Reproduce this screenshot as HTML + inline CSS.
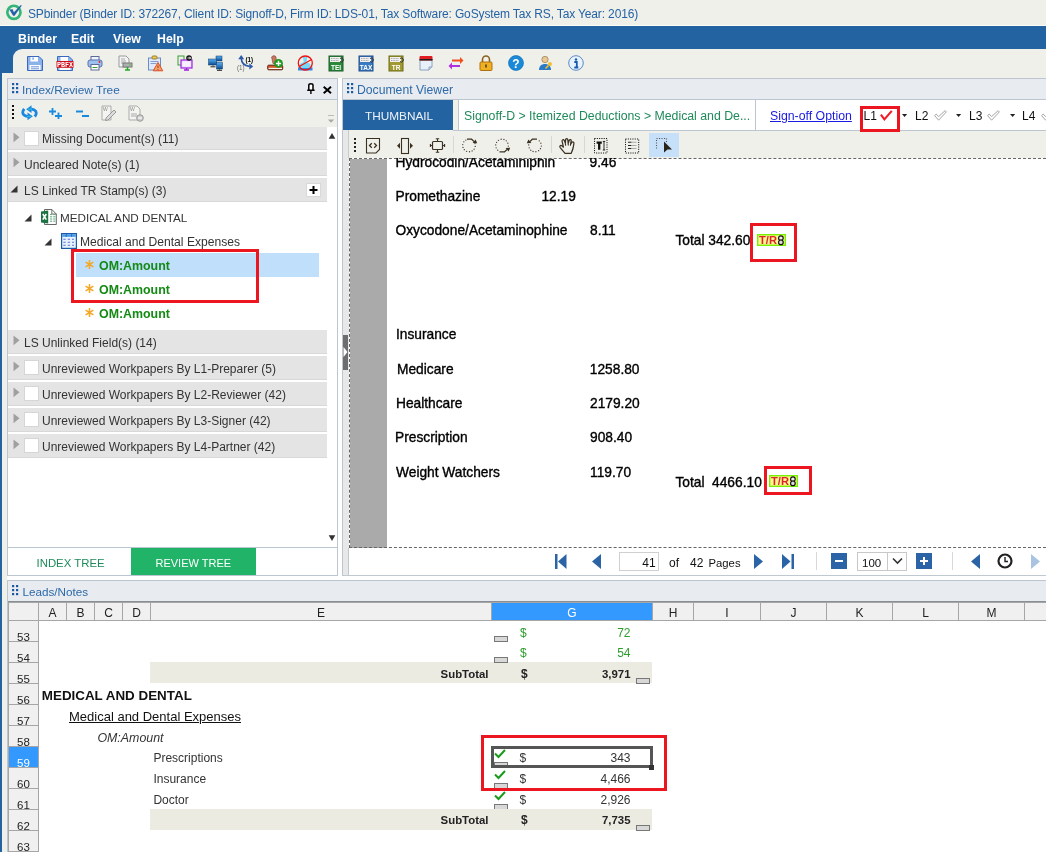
<!DOCTYPE html>
<html><head><meta charset="utf-8">
<style>
*{box-sizing:border-box}
html,body{margin:0;padding:0}
body{width:1046px;height:852px;overflow:hidden;position:relative;background:#f0f0eb;font-family:"Liberation Sans",sans-serif;font-size:12px;color:#222}
.a{position:absolute}
.t{position:absolute;white-space:nowrap;line-height:1}
svg{overflow:visible}
</style></head><body><div style="position:absolute;left:0;top:0;width:1046px;height:852px;overflow:hidden;will-change:transform">
<div class="a" style="left:0px;top:0px;width:1046px;height:25px;background:#f0f0eb"></div>
<div class="a" style="left:0px;top:25px;width:1046px;height:1px;background:#fbfbf8"></div>
<svg class="a" style="left:5px;top:3px" width="18" height="18" viewBox="0 0 18 18"><circle cx="8.9" cy="9.35" r="6.6" fill="none" stroke="#35b679" stroke-width="2.7"/><path d="M4.3 6.6L7.7 6.3L8.9 9.3L15.9 2.1L16.8 2.5L9.6 12.8L8.1 12.8Z" fill="#2562a8"/></svg>
<div class="t" style="left:28px;top:8px;font-size:12px;color:#2462a6;letter-spacing:-0.14px">SPbinder (Binder ID: 372267, Client ID: Signoff-D, Firm ID: LDS-01, Tax Software: GoSystem Tax RS, Tax Year: 2016)</div>
<div class="a" style="left:0px;top:26px;width:1046px;height:47px;background:#2463a1"></div>
<div class="t" style="left:18px;top:33px;font-size:12.3px;color:#fff;font-weight:bold">Binder</div>
<div class="t" style="left:71px;top:33px;font-size:12.3px;color:#fff;font-weight:bold">Edit</div>
<div class="t" style="left:113px;top:33px;font-size:12.3px;color:#fff;font-weight:bold">View</div>
<div class="t" style="left:157px;top:33px;font-size:12.3px;color:#fff;font-weight:bold">Help</div>
<div class="a" style="left:13px;top:49px;width:1033px;height:24px;background:#f0f0eb;border-top-left-radius:9px"></div>
<svg class="a" style="left:27px;top:55px" width="16" height="16" viewBox="0 0 16 16"><path d="M.5 1.5H12L15.5 5V15.5H.5Z" fill="#8cb2ea" stroke="#3a68c0"/><rect x="3.5" y="2" width="7.5" height="4.5" fill="#fff"/><rect x="5.2" y="2.5" width="1.8" height="2.2" fill="#8cb2ea"/><rect x="2.5" y="10" width="11" height="5" fill="#fff"/><path d="M4 11.8h8M4 13.8h8" stroke="#6a90d8"/></svg>
<svg class="a" style="left:57px;top:55px" width="16" height="16" viewBox="0 0 16 16"><path d="M.5 1.5H12L15.5 5V15.5H.5Z" fill="#8cb2ea" stroke="#3a68c0"/><rect x="3.5" y="2" width="7.5" height="4.5" fill="#fff"/><rect x="2.5" y="12" width="11" height="3" fill="#fff"/><rect x="-.5" y="6" width="17" height="6.8" fill="#d0101c"/><text x="8" y="11.8" font-size="7" font-family="Liberation Mono" font-weight="bold" fill="#fff" text-anchor="middle" textLength="16" lengthAdjust="spacingAndGlyphs">PBFX</text></svg>
<svg class="a" style="left:87px;top:55px" width="16" height="16" viewBox="0 0 16 16"><rect x="4" y="1.5" width="8" height="4" fill="#eef3fc" stroke="#606a98"/><rect x="1" y="5" width="14" height="7" rx="2" fill="#9cc0f0" stroke="#5a70a8"/><circle cx="12.5" cy="7" r=".9" fill="#e02020"/><rect x="4" y="9.5" width="8" height="5.5" fill="#fff" stroke="#606a98"/><path d="M5.5 12.5h5" stroke="#30a030"/></svg>
<svg class="a" style="left:117px;top:55px" width="16" height="16" viewBox="0 0 16 16"><path d="M2 1h7l3 3v8H2z" fill="#f4f4f4" stroke="#9a9a9a"/><path d="M4 4h4M4 6h5M4 8h5" stroke="#9a9a9a" stroke-width=".8"/><rect x="6" y="8" width="9" height="4" fill="#b0b0b0" stroke="#777"/><circle cx="13" cy="10" r=".7" fill="#3c3"/><path d="M10.5 12v2.5M8 15h5" stroke="#2a2" stroke-width="1.5"/></svg>
<svg class="a" style="left:147px;top:55px" width="16" height="16" viewBox="0 0 16 16"><rect x="1.5" y="3" width="12" height="12" fill="#dfe9fa" stroke="#6a8cc8"/><rect x="5" y="1" width="5" height="3" rx="1" fill="#e8c860" stroke="#a08020"/><path d="M3.5 6.5h8M3.5 8.5h6" stroke="#6a8cc8" stroke-width=".8"/><path d="M11 7.5l4.8 8.3H6.2z" fill="#f0a070" stroke="#e05020"/><path d="M11 10.5v2.5M11 14v.8" stroke="#c03000"/></svg>
<svg class="a" style="left:177px;top:55px" width="16" height="16" viewBox="0 0 16 16"><rect x="1" y="1" width="6" height="9" fill="#e9f5e0" stroke="#3a9a3a"/><rect x="4" y="5" width="11" height="8" fill="#e8d8ff" stroke="#a020e0" stroke-width="1.2"/><rect x="5.5" y="6.5" width="8" height="5" fill="#f8f0ff"/><path d="M7 15h5M9.5 13v2" stroke="#a020e0" stroke-width="1.3"/><circle cx="12" cy="3" r="2.8" fill="#111"/><path d="M10.5 3h3M12.5 1.8l1 1.2-1 1.2" stroke="#fff" stroke-width=".9" fill="none"/></svg>
<svg class="a" style="left:207px;top:55px" width="16" height="16" viewBox="0 0 16 16"><defs><linearGradient id="mg" x1="0" y1="0" x2="0" y2="1"><stop offset="0" stop-color="#5ab0f0"/><stop offset="1" stop-color="#0a4a90"/></linearGradient></defs><rect x="9" y="1" width="6" height="5" fill="url(#mg)" stroke="#0a3a70" stroke-width=".5"/><rect x="1.5" y="4" width="8" height="6" fill="url(#mg)" stroke="#0a3a70" stroke-width=".5"/><rect x="9.5" y="7.5" width="6" height="6.5" fill="url(#mg)" stroke="#0a3a70" stroke-width=".5"/><path d="M3.5 11.8h5M10 15.3h5" stroke="#222" stroke-width="1"/><path d="M6 10v1.5M12.5 14v1.3" stroke="#666"/></svg>
<svg class="a" style="left:237px;top:55px" width="16" height="16" viewBox="0 0 16 16"><path d="M4.3 3.5C4.5 8 7 10.8 12.5 11.3" stroke="#2a5aa8" stroke-width="1.7" fill="none"/><path d="M4.2 0L1.2 4.2H7.2Z" fill="#2a5aa8"/><path d="M16.2 11.4L12.3 8.3V14.5Z" fill="#2a5aa8"/><text x="12.3" y="6.6" font-size="6.3" font-weight="bold" font-family="Liberation Sans" text-anchor="middle" fill="#000">(1)</text><text x="3.8" y="15.3" font-size="6.3" font-family="Liberation Sans" text-anchor="middle" fill="#666">(1)</text></svg>
<svg class="a" style="left:267px;top:55px" width="16" height="16" viewBox="0 0 16 16"><path d="M4.6 2.2C5.4 .2 8.4 .3 9 2l.6 6.2-3.6.4Z" fill="#c87860" stroke="#7a4030" stroke-width=".6"/><rect x=".7" y="10.2" width="15" height="4.6" rx="1" fill="#d85a28" stroke="#5a2010" stroke-width="1"/><path d="M1.6 13.4h13.4" stroke="#fff" stroke-width="1.1"/><circle cx="11.5" cy="8.4" r="4.4" fill="#1e9a1e"/><path d="M11.5 5.8v5.2M8.9 8.4h5.2" stroke="#fff" stroke-width="1.5"/></svg>
<svg class="a" style="left:297px;top:55px" width="16" height="16" viewBox="0 0 16 16"><rect x="1" y="12.3" width="14.5" height="3.2" fill="#2a8ae8"/><path d="M5.8 1.8h4.6l-.9 5.2 4 2v4H2.7v-4l4-2z" fill="#78d8f8"/><circle cx="8.3" cy="8" r="7" fill="none" stroke="#f01010" stroke-width="1.3"/><path d="M2.2 11.6L14.6 4.4" stroke="#f01010" stroke-width="1.1"/></svg>
<svg class="a" style="left:328px;top:55px" width="16" height="16" viewBox="0 0 16 16"><rect x="1" y="1" width="14" height="15" fill="#2a8a3a" stroke="#1a5a2a"/><rect x="2" y="2" width="11" height="5" fill="#f0f0f0"/><path d="M3 3.5h8M3 5.5h8" stroke="#888" stroke-width=".7" stroke-dasharray="1 .6"/><path d="M12 3.5a2 2 0 1 1 0 3" stroke="#333" fill="none"/><text x="8" y="14.5" font-size="6.5" font-weight="bold" font-family="Liberation Sans" text-anchor="middle" fill="#fff">TEI</text></svg>
<svg class="a" style="left:358px;top:55px" width="16" height="16" viewBox="0 0 16 16"><rect x="1" y="1" width="14" height="15" fill="#3a7ac0" stroke="#1a4a8a"/><rect x="2" y="2" width="11" height="5" fill="#f0f0f0"/><path d="M3 3.5h8M3 5.5h8" stroke="#888" stroke-width=".7" stroke-dasharray="1 .6"/><path d="M12 3.5a2 2 0 1 1 0 3" stroke="#333" fill="none"/><text x="8" y="14.5" font-size="6.5" font-weight="bold" font-family="Liberation Sans" text-anchor="middle" fill="#fff">TAX</text></svg>
<svg class="a" style="left:388px;top:55px" width="16" height="16" viewBox="0 0 16 16"><rect x="1" y="1" width="14" height="15" fill="#a09a30" stroke="#6a6a10"/><rect x="2" y="2" width="11" height="5" fill="#f0f0f0"/><path d="M3 3.5h8M3 5.5h8" stroke="#888" stroke-width=".7" stroke-dasharray="1 .6"/><path d="M12 3.5a2 2 0 1 1 0 3" stroke="#333" fill="none"/><text x="8" y="14.5" font-size="6.5" font-weight="bold" font-family="Liberation Sans" text-anchor="middle" fill="#fff">TR</text></svg>
<svg class="a" style="left:418px;top:55px" width="16" height="16" viewBox="0 0 16 16"><path d="M2 4h12v8l-3 3H2z" fill="#e8f0fa" stroke="#8aa0c0"/><path d="M11 15v-3h3" fill="#d0dcea" stroke="#8aa0c0"/><rect x="1.5" y="1" width="13" height="4.5" rx="1" fill="#e01c24"/><rect x="1.5" y="4" width="13" height="1.5" fill="#202020"/></svg>
<svg class="a" style="left:448px;top:55px" width="16" height="16" viewBox="0 0 16 16"><path d="M4 5.5h9" stroke="#f05020" stroke-width="2"/><path d="M12 2l3.5 3.5L12 9z" fill="#f05020"/><path d="M3 11h9" stroke="#b030e0" stroke-width="2"/><path d="M4 7.5L.5 11 4 14.5z" fill="#b030e0"/></svg>
<svg class="a" style="left:478px;top:55px" width="16" height="16" viewBox="0 0 16 16"><path d="M4.5 7V4.5a3.5 3.5 0 0 1 7 0V7" stroke="#8a6020" stroke-width="1.6" fill="none"/><rect x="2" y="7" width="12" height="8.5" rx="1" fill="#f0b020" stroke="#b07010"/><rect x="7.3" y="9.5" width="1.4" height="3" fill="#333"/></svg>
<svg class="a" style="left:508px;top:55px" width="16" height="16" viewBox="0 0 16 16"><circle cx="8" cy="8" r="7.5" fill="#1a8ad8" stroke="#0a6ab0" stroke-width=".6"/><text x="8" y="12.5" font-size="12" font-weight="bold" font-family="Liberation Sans" text-anchor="middle" fill="#fff">?</text></svg>
<svg class="a" style="left:538px;top:55px" width="16" height="16" viewBox="0 0 16 16"><circle cx="7" cy="4.5" r="3.2" fill="#e8c890" stroke="#8a6a40" stroke-width=".6"/><path d="M1 15c0-4 2.5-6 6-6s6 2 6 6z" fill="#2a7ac8"/><circle cx="12" cy="9" r="2" fill="#f0c030"/><path d="M10.5 10.5l-3 3" stroke="#f0c030" stroke-width="1.6"/></svg>
<svg class="a" style="left:568px;top:55px" width="16" height="16" viewBox="0 0 16 16"><circle cx="8" cy="8" r="7.3" fill="#e8f2fc" stroke="#5a8ac8" stroke-width="1"/><circle cx="8" cy="4.5" r="1.2" fill="#1a5ab0"/><path d="M6.3 7h2.5v5.5M6.3 12.5h4" stroke="#1a5ab0" stroke-width="1.8" fill="none"/></svg>
<div class="a" style="left:0px;top:73px;width:2px;height:779px;background:#2463a1"></div>
<div class="a" style="left:7px;top:78px;width:331px;height:498px;border:1px solid #bcc6d0;background:#fff"></div>
<div class="a" style="left:8px;top:79px;width:329px;height:21px;background:#e8ebf0;border-bottom:1px solid #bcc6d0"></div>
<svg class="a" style="left:12px;top:83px" width="8" height="11" viewBox="0 0 8 11"><rect x="0" y="0" width="2.2" height="2.2" fill="#1a5aa0"/><rect x="4" y="0" width="2.2" height="2.2" fill="#1a5aa0"/><rect x="0" y="4" width="2.2" height="2.2" fill="#1a5aa0"/><rect x="4" y="4" width="2.2" height="2.2" fill="#1a5aa0"/><rect x="0" y="8" width="2.2" height="2.2" fill="#1a5aa0"/><rect x="4" y="8" width="2.2" height="2.2" fill="#1a5aa0"/></svg>
<div class="t" style="left:22px;top:85px;font-size:11.8px;color:#2d6aa8;">Index/Review Tree</div>
<svg class="a" style="left:307px;top:83px" width="8" height="11" viewBox="0 0 8 11"><path d="M1.8 7V2.3C1.8 1.2 2.6 .8 3.9 .8C5.2 .8 6 1.2 6 2.3V7" stroke="#000" stroke-width="1.5" fill="#fff"/><path d="M.2 7.3H7.6M3.9 7.3V11" stroke="#000" stroke-width="1.4"/></svg>
<svg class="a" style="left:323px;top:85.5px" width="9" height="8" viewBox="0 0 9 8"><path d="M.7 .7l7.3 6.6M8 .7L.7 7.3" stroke="#000" stroke-width="1.9"/></svg>
<div class="a" style="left:8px;top:100px;width:329px;height:27px;background:#f0f0eb"></div>
<svg class="a" style="left:12px;top:105px" width="3" height="17" viewBox="0 0 3 17"><rect x="0" y="0" width="2" height="2" fill="#111"/><rect x="0" y="4" width="2" height="2" fill="#111"/><rect x="0" y="8" width="2" height="2" fill="#111"/><rect x="0" y="12" width="2" height="2" fill="#111"/></svg>
<svg class="a" style="left:21px;top:105px" width="17" height="16" viewBox="0 0 17 16"><path d="M9 4.2C12 3.8 15.3 5.2 15.3 8C15.3 9.5 14.6 10.6 13.8 11.6" stroke="#1a88e0" stroke-width="2.8" fill="none"/><path d="M5.2 4.2L10.5 0.3V8.1Z" fill="#1a88e0"/><path d="M8 11.3C5 11.7 1.7 10.3 1.7 7.5C1.7 6 2.4 4.9 3.2 3.9" stroke="#1a88e0" stroke-width="2.8" fill="none"/><path d="M11.8 11.3L6.5 7.4V15.2Z" fill="#1a88e0"/><path d="M7 4.2h4M10 11.3h-4" stroke="#38c4d8" stroke-width="1"/></svg>
<svg class="a" style="left:49px;top:108px" width="14" height="11" viewBox="0 0 14 11"><path d="M0 3.5h7M3.5 0v7M6 8h7M9.5 4.5v6.5" stroke="#1a8ae0" stroke-width="1.8"/></svg>
<svg class="a" style="left:76px;top:110px" width="14" height="8" viewBox="0 0 14 8"><path d="M0 1.5h7M6 6h7" stroke="#1a8ae0" stroke-width="1.8"/></svg>
<svg class="a" style="left:101px;top:105px" width="16" height="16" viewBox="0 0 16 16"><path d="M1 1h9v14H1z" fill="#f4f4f0" stroke="#aaa"/><text x="2" y="6" font-size="5" fill="#888" font-family="Liberation Sans">W</text><path d="M5 13l8-8 2 2-8 8-2.5.5z" fill="#ddd" stroke="#999"/></svg>
<svg class="a" style="left:128px;top:105px" width="16" height="17" viewBox="0 0 16 17"><path d="M1 1h8l3 3v11H1z" fill="#f4f4f0" stroke="#aaa"/><text x="2" y="6" font-size="5" fill="#888" font-family="Liberation Sans">W</text><path d="M3 9h6M3 11h6" stroke="#aaa"/><circle cx="12" cy="13" r="3.3" fill="#ccc" stroke="#999"/><path d="M10 13h4" stroke="#fff" stroke-width="1.2"/></svg>
<svg class="a" style="left:327px;top:114px" width="8" height="10" viewBox="0 0 8 10"><path d="M1 1.5h6" stroke="#bbb"/><path d="M.8 5.6h6.4L4 8.8z" fill="#aaa"/></svg>
<div class="a" style="left:8px;top:127px;width:319px;height:23px;background:#e4e4e4;border-bottom:1px solid #d8d8d8"></div>
<div class="a" style="left:8px;top:152px;width:319px;height:23.5px;background:#e4e4e4;border-bottom:1px solid #d8d8d8"></div>
<div class="a" style="left:8px;top:178px;width:319px;height:23.5px;background:#e4e4e4;border-bottom:1px solid #d8d8d8"></div>
<div class="a" style="left:8px;top:330px;width:319px;height:23.5px;background:#e4e4e4;border-bottom:1px solid #d8d8d8"></div>
<div class="a" style="left:8px;top:356px;width:319px;height:23.5px;background:#e4e4e4;border-bottom:1px solid #d8d8d8"></div>
<div class="a" style="left:8px;top:382px;width:319px;height:23.5px;background:#e4e4e4;border-bottom:1px solid #d8d8d8"></div>
<div class="a" style="left:8px;top:408px;width:319px;height:23.5px;background:#e4e4e4;border-bottom:1px solid #d8d8d8"></div>
<div class="a" style="left:8px;top:434px;width:319px;height:23.5px;background:#e4e4e4;border-bottom:1px solid #d8d8d8"></div>
<svg class="a" style="left:13px;top:131.5px" width="7" height="11" viewBox="0 0 7 11"><path d="M0.5 0.5L6.5 5.3L0.5 10.2z" fill="#a0a0a0"/></svg>
<div class="a" style="left:24px;top:130.5px;width:15px;height:15px;background:#fff;border:1px solid #d6d6d6"></div>
<div class="t" style="left:42px;top:133px;font-size:12px;color:#333;">Missing Document(s) (11)</div>
<svg class="a" style="left:13px;top:156.5px" width="7" height="11" viewBox="0 0 7 11"><path d="M0.5 0.5L6.5 5.3L0.5 10.2z" fill="#a0a0a0"/></svg>
<div class="t" style="left:24px;top:159px;font-size:12px;color:#333;">Uncleared Note(s) (1)</div>
<svg class="a" style="left:13px;top:334.5px" width="7" height="11" viewBox="0 0 7 11"><path d="M0.5 0.5L6.5 5.3L0.5 10.2z" fill="#a0a0a0"/></svg>
<div class="t" style="left:24px;top:337px;font-size:12px;color:#333;">LS Unlinked Field(s) (14)</div>
<svg class="a" style="left:13px;top:360.5px" width="7" height="11" viewBox="0 0 7 11"><path d="M0.5 0.5L6.5 5.3L0.5 10.2z" fill="#a0a0a0"/></svg>
<div class="a" style="left:24px;top:359.5px;width:15px;height:15px;background:#fff;border:1px solid #d6d6d6"></div>
<div class="t" style="left:42px;top:363px;font-size:12px;color:#333;">Unreviewed Workpapers By L1-Preparer (5)</div>
<svg class="a" style="left:13px;top:386.5px" width="7" height="11" viewBox="0 0 7 11"><path d="M0.5 0.5L6.5 5.3L0.5 10.2z" fill="#a0a0a0"/></svg>
<div class="a" style="left:24px;top:385.5px;width:15px;height:15px;background:#fff;border:1px solid #d6d6d6"></div>
<div class="t" style="left:42px;top:389px;font-size:12px;color:#333;">Unreviewed Workpapers By L2-Reviewer (42)</div>
<svg class="a" style="left:13px;top:412.5px" width="7" height="11" viewBox="0 0 7 11"><path d="M0.5 0.5L6.5 5.3L0.5 10.2z" fill="#a0a0a0"/></svg>
<div class="a" style="left:24px;top:411.5px;width:15px;height:15px;background:#fff;border:1px solid #d6d6d6"></div>
<div class="t" style="left:42px;top:415px;font-size:12px;color:#333;">Unreviewed Workpapers By L3-Signer (42)</div>
<svg class="a" style="left:13px;top:438.5px" width="7" height="11" viewBox="0 0 7 11"><path d="M0.5 0.5L6.5 5.3L0.5 10.2z" fill="#a0a0a0"/></svg>
<div class="a" style="left:24px;top:437.5px;width:15px;height:15px;background:#fff;border:1px solid #d6d6d6"></div>
<div class="t" style="left:42px;top:441px;font-size:12px;color:#333;">Unreviewed Workpapers By L4-Partner (42)</div>
<svg class="a" style="left:9.5px;top:185px" width="8" height="8" viewBox="0 0 8 8"><path d="M7.5 0.5V7.5H0.5z" fill="#333"/></svg>
<div class="t" style="left:24px;top:185px;font-size:12px;color:#333;">LS Linked TR Stamp(s) (3)</div>
<div class="a" style="left:306px;top:183px;width:15px;height:14px;background:#fff;border:1px solid #d8d8d8"></div>
<svg class="a" style="left:308px;top:185px" width="11" height="10" viewBox="0 0 11 10"><path d="M5.5 1v8M1.5 5h8" stroke="#000" stroke-width="2"/></svg>
<svg class="a" style="left:328px;top:133px" width="8" height="6" viewBox="0 0 8 6"><path d="M4 0L7.3 5.8H.7z" fill="#333"/></svg>
<svg class="a" style="left:328px;top:535px" width="8" height="6" viewBox="0 0 8 6"><path d="M.7 .2h6.6L4 6z" fill="#333"/></svg>
<svg class="a" style="left:23.5px;top:213.5px" width="8" height="8" viewBox="0 0 8 8"><path d="M7.5 0.5V7.5H0.5z" fill="#333"/></svg>
<svg class="a" style="left:41px;top:209px" width="16" height="16" viewBox="0 0 16 16"><path d="M3.5 .5H10.8L15.3 5V15.5H3.5Z" fill="#fff" stroke="#555" stroke-width=".9"/><path d="M10.8 .5V5H15.3" fill="none" stroke="#555" stroke-width=".8"/><path d="M9 5.6h2.2M12.2 5.6h2.2M9 7.8h2.2M12.2 7.8h2.2M9 10h2.2M12.2 10h2.2M9 12.2h2.2M12.2 12.2h2.2" stroke="#5aa878" stroke-width="1"/><path d="M0 2.6L7.2 1.6V14.5L0 13.5Z" fill="#1d7344"/><path d="M1.8 5L5.3 10.6M5.3 5L1.8 10.6" stroke="#fff" stroke-width="1.6"/></svg>
<div class="t" style="left:60px;top:212px;font-size:11.7px;color:#333;">MEDICAL AND DENTAL</div>
<svg class="a" style="left:43.5px;top:237.5px" width="8" height="8" viewBox="0 0 8 8"><path d="M7.5 0.5V7.5H0.5z" fill="#333"/></svg>
<svg class="a" style="left:61px;top:233px" width="16" height="16" viewBox="0 0 16 16"><rect x=".6" y=".6" width="14.8" height="14.8" fill="#e4f6fc" stroke="#1a5aa8" stroke-width="1.2"/><rect x="1.2" y="1.2" width="13.6" height="2.6" fill="#4a9ae8"/><path d="M5.3 1v3M10.6 1v3" stroke="#1a5aa8" stroke-width=".7"/><path d="M2.3 6.3h2.4M6.7 6.3h2.4M11 6.3h2M2.3 9.3h2.4M6.7 9.3h2.4M11 9.3h2M2.3 12.3h2.4M6.7 12.3h2.4M11 12.3h2" stroke="#6a6ad8" stroke-width="1.1"/></svg>
<div class="t" style="left:80px;top:236px;font-size:12.1px;color:#333;">Medical and Dental Expenses</div>
<div class="a" style="left:76px;top:253px;width:243px;height:24px;background:#bfdffb"></div>
<svg class="a" style="left:85px;top:260px" width="9" height="9" viewBox="0 0 9 9"><path d="M4.5 0v9M.6 2.2l7.8 4.6M.6 6.8l7.8-4.6" stroke="#f5a623" stroke-width="1.5"/></svg>
<div class="t" style="left:99px;top:260px;font-size:12.4px;color:#138a13;font-weight:bold">OM:Amount</div>
<svg class="a" style="left:85px;top:284px" width="9" height="9" viewBox="0 0 9 9"><path d="M4.5 0v9M.6 2.2l7.8 4.6M.6 6.8l7.8-4.6" stroke="#f5a623" stroke-width="1.5"/></svg>
<div class="t" style="left:99px;top:284px;font-size:12.4px;color:#138a13;font-weight:bold">OM:Amount</div>
<svg class="a" style="left:85px;top:308px" width="9" height="9" viewBox="0 0 9 9"><path d="M4.5 0v9M.6 2.2l7.8 4.6M.6 6.8l7.8-4.6" stroke="#f5a623" stroke-width="1.5"/></svg>
<div class="t" style="left:99px;top:308px;font-size:12.4px;color:#138a13;font-weight:bold">OM:Amount</div>
<div class="a" style="left:71px;top:249px;width:188px;height:54px;border:3px solid #ec1620"></div>
<div class="a" style="left:8px;top:547px;width:329px;height:1px;background:#bcc6d0"></div>
<div class="a" style="left:131px;top:548px;width:125px;height:27px;background:#21b468"></div>
<div class="t" style="left:36.5px;top:558px;font-size:11.4px;color:#1f8a5a;">INDEX TREE</div>
<div class="t" style="left:155.5px;top:558px;font-size:11.0px;color:#fff;">REVIEW TREE</div>
<div class="a" style="left:338px;top:78px;width:4px;height:498px;background:#fff"></div>
<div class="a" style="left:342px;top:78px;width:704px;height:498px;border:1px solid #bcc6d0;border-right:none;background:#fff"></div>
<div class="a" style="left:343px;top:79px;width:703px;height:21px;background:#e8ebf0;border-bottom:1px solid #bcc6d0"></div>
<svg class="a" style="left:347px;top:83px" width="8" height="11" viewBox="0 0 8 11"><rect x="0" y="0" width="2.2" height="2.2" fill="#1a5aa0"/><rect x="4" y="0" width="2.2" height="2.2" fill="#1a5aa0"/><rect x="0" y="4" width="2.2" height="2.2" fill="#1a5aa0"/><rect x="4" y="4" width="2.2" height="2.2" fill="#1a5aa0"/><rect x="0" y="8" width="2.2" height="2.2" fill="#1a5aa0"/><rect x="4" y="8" width="2.2" height="2.2" fill="#1a5aa0"/></svg>
<div class="t" style="left:357px;top:84px;font-size:12.2px;color:#2d6aa8;">Document Viewer</div>
<div class="a" style="left:343px;top:100px;width:110px;height:30px;background:#2463a1"></div>
<div class="t" style="left:365px;top:111px;font-size:11.8px;color:#eef2f7;">THUMBNAIL</div>
<div class="a" style="left:453px;top:100px;width:5px;height:30px;background:#f0f0eb"></div>
<div class="a" style="left:458px;top:100px;width:588px;height:30px;background:#fff;border-left:1px solid #bcc6d0"></div>
<div class="t" style="left:464px;top:110px;font-size:12.3px;color:#1f8a5a;">Signoff-D &gt; Itemized Deductions &gt; Medical and De...</div>
<div class="a" style="left:755px;top:100px;width:1px;height:30px;background:#bcc6d0"></div>
<div class="t" style="left:770px;top:110px;font-size:12.3px;color:#1a1ae0;text-decoration:underline">Sign-off Option</div>
<div class="t" style="left:863.5px;top:110px;font-size:12px;color:#111;">L1</div>
<svg class="a" style="left:880px;top:110px" width="13" height="11" viewBox="0 0 13 11"><path d="M.9 4.6L4.4 9.4L11.8 .9" stroke="#ee1c25" stroke-width="2.1" fill="none"/></svg>
<svg class="a" style="left:902px;top:113.5px" width="6" height="4" viewBox="0 0 6 4"><path d="M0 0h5.2L2.6 3z" fill="#222"/></svg>
<div class="t" style="left:915px;top:110px;font-size:12px;color:#111;">L2</div>
<svg class="a" style="left:934px;top:110px" width="13" height="11" viewBox="0 0 13 11"><path d="M.6 5.6L2.2 4.1L4.6 6.6L11.2 .6L12.4 1.9L4.6 10.2Z" fill="#fff" stroke="#9a9a9a" stroke-width=".9"/></svg>
<svg class="a" style="left:956px;top:113.5px" width="6" height="4" viewBox="0 0 6 4"><path d="M0 0h5.2L2.6 3z" fill="#222"/></svg>
<div class="t" style="left:969px;top:110px;font-size:12px;color:#111;">L3</div>
<svg class="a" style="left:987px;top:110px" width="13" height="11" viewBox="0 0 13 11"><path d="M.6 5.6L2.2 4.1L4.6 6.6L11.2 .6L12.4 1.9L4.6 10.2Z" fill="#fff" stroke="#9a9a9a" stroke-width=".9"/></svg>
<svg class="a" style="left:1010px;top:113.5px" width="6" height="4" viewBox="0 0 6 4"><path d="M0 0h5.2L2.6 3z" fill="#222"/></svg>
<div class="t" style="left:1022px;top:110px;font-size:12px;color:#111;">L4</div>
<svg class="a" style="left:1041px;top:110px" width="13" height="11" viewBox="0 0 13 11"><path d="M.6 5.6L2.2 4.1L4.6 6.6L11.2 .6L12.4 1.9L4.6 10.2Z" fill="#fff" stroke="#9a9a9a" stroke-width=".9"/></svg>
<div class="a" style="left:343px;top:130px;width:6px;height:418px;background:#e8e8e8"></div>
<div class="a" style="left:349px;top:158px;width:38px;height:390px;background:#aaa"></div>
<div class="a" style="left:343px;top:335px;width:5px;height:35px;background:#6e6e6e"></div>
<svg class="a" style="left:343px;top:345px" width="5" height="14" viewBox="0 0 5 14"><path d="M0.5 2L4.5 7L0.5 12z" fill="#fff"/></svg>
<div class="a" style="left:349px;top:130px;width:697px;height:28px;background:#f0f0eb"></div>
<div class="a" style="left:348px;top:130px;width:1px;height:28px;background:#c4ccd4"></div>
<div class="a" style="left:453px;top:130px;width:593px;height:1px;background:#bcc6d0"></div>
<div class="a" style="left:860px;top:106px;width:40px;height:26px;border:3px solid #ec1620"></div>
<svg class="a" style="left:354px;top:138px" width="3" height="15" viewBox="0 0 3 15"><rect x="0" y="0" width="2" height="2" fill="#222"/><rect x="0" y="4" width="2" height="2" fill="#222"/><rect x="0" y="8" width="2" height="2" fill="#222"/><rect x="0" y="12" width="2" height="2" fill="#222"/></svg>
<svg class="a" style="left:365px;top:137px" width="16" height="18" viewBox="0 0 16 18"><path d="M1.5 1.5h13v11l-3.5 3.5H1.5z" fill="none" stroke="#3a3020" stroke-width="1.1"/><path d="M6.8 6.3l-2.3 2.2 2.3 2.2M9.2 6.3l2.3 2.2-2.3 2.2" stroke="#3a3020" stroke-width="1.3" fill="none"/></svg>
<svg class="a" style="left:396px;top:137px" width="18" height="18" viewBox="0 0 18 18"><rect x="5.5" y="1.5" width="7" height="15" fill="none" stroke="#3a3020" stroke-width="1.1"/><path d="M1 8.8l3-3v6zM17 8.8l-3-3v6z" fill="#3a3020"/></svg>
<svg class="a" style="left:429px;top:137px" width="17" height="17" viewBox="0 0 17 17"><rect x="3.5" y="4.5" width="10" height="8" rx="1" fill="none" stroke="#3a3020" stroke-width="1.2"/><path d="M8.5 4.2V2.3M6.8 1.8h3.4M8.5 12.8v1.9M6.8 15.2h3.4M3.2 8.5H1.6M1.4 6.9v3.2M13.8 8.5h1.6M15.6 6.9v3.2" stroke="#3a3020" stroke-width="1.1"/></svg>
<div class="a" style="left:453px;top:136px;width:1px;height:17px;background:#d8d8d2"></div>
<svg class="a" style="left:462px;top:138px" width="16" height="16" viewBox="0 0 16 16"><path d="M3.85 2.04A6.3 6.3 0 1 0 12.46 4.35" stroke="#3a3020" stroke-width="1.3" stroke-linecap="round" stroke-dasharray="0 2.75" fill="none"/><path d="M5 1.2H9.6L12.2 3.6" stroke="#3a3020" stroke-width="1.2" fill="none"/><path d="M15.2 5.2L10.6 5.1L13.6 1.6Z" fill="#3a3020"/></svg>
<svg class="a" style="left:495px;top:138px" width="16" height="16" viewBox="0 0 16 16"><path d="M12.46 10.65A6.3 6.3 0 1 0 3.85 12.96" stroke="#3a3020" stroke-width="1.3" stroke-linecap="round" stroke-dasharray="0 2.75" fill="none"/><path d="M4.5 13.8H9.6L12.2 11.4" stroke="#3a3020" stroke-width="1.2" fill="none"/><path d="M15.2 9.8L10.6 9.9L13.6 13.4Z" fill="#3a3020"/></svg>
<svg class="a" style="left:528px;top:138px" width="16" height="16" viewBox="0 0 16 16"><path d="M1.54 4.35A6.3 6.3 0 1 0 10.15 2.04" stroke="#3a3020" stroke-width="1.3" stroke-linecap="round" stroke-dasharray="0 2.75" fill="none"/><path d="M9 1.2H4.4L1.8 3.6" stroke="#3a3020" stroke-width="1.2" fill="none"/><path d="M-1.2 5.2L3.4 5.1L.4 1.6Z" fill="#3a3020"/></svg>
<div class="a" style="left:551px;top:136px;width:1px;height:17px;background:#d8d8d2"></div>
<svg class="a" style="left:559px;top:138px" width="16" height="16" viewBox="0 0 16 16"><path d="M6 15.3L1.2 9.6C.2 8.2 1.6 6.6 3 7.9L4.4 9.2L3.1 3.2C2.8 1.6 4.6 1.1 5.3 2.6L6.4 5.2L6.6 1.6C6.7 .3 8.7 .3 8.8 1.6L9.2 5.2L10.3 2.3C10.8 1 12.5 1.5 12.2 2.9L11.6 6L12.9 4.3C13.7 3.5 15.2 4 14.9 5.6L14.1 10C13.6 12.1 12.7 14 12.2 15.3Z" fill="#f0f0eb" stroke="#3a3020" stroke-width="1.25" stroke-linejoin="round"/><path d="M6.4 5.2L6.6 7.6M9.2 5.2L9.3 7.4M11.6 6L11.4 7.8" stroke="#3a3020" stroke-width="1.1"/></svg>
<div class="a" style="left:584px;top:136px;width:1px;height:17px;background:#d8d8d2"></div>
<svg class="a" style="left:594px;top:138px" width="14" height="16" viewBox="0 0 14 16"><rect x=".5" y=".5" width="12.5" height="14.5" fill="none" stroke="#111" stroke-dasharray="1.1 1.2"/><path d="M2.6 4.6h5.2M5.2 4.6v7.2" stroke="#111" stroke-width="2.3"/><path d="M8.8 3.4h2.4M10 3.4v8.6M8.8 12h2.4" stroke="#111" stroke-width=".9"/></svg>
<svg class="a" style="left:625px;top:138px" width="15" height="16" viewBox="0 0 15 16"><rect x=".5" y="1" width="13.2" height="14" fill="none" stroke="#111" stroke-dasharray="1.1 1.2"/><path d="M3 4.2h3.5M3 7.5h3.5M3 10.5h3.5" stroke="#222" stroke-width="1.1"/><path d="M6.5 4.2h5M6.5 7.5h5M6.5 10.5h5" stroke="#aaa" stroke-width="1.1"/></svg>
<div class="a" style="left:649px;top:133px;width:30px;height:24px;background:#c5e0f8"></div>
<svg class="a" style="left:655px;top:137px" width="18" height="17" viewBox="0 0 18 17"><path d="M1.5 11.5V1.5H11.5V5" fill="none" stroke="#555" stroke-width="1.1" stroke-dasharray="1.1 1.4"/><path d="M9 4.5L17 12.5H12.5L9 15.5Z" fill="#2a2418"/></svg>
<div class="a" style="left:349px;top:158px;width:697px;height:390px;background:#fff;overflow:hidden">
<div class="a" style="left:0px;top:0px;width:697px;height:1px;border-top:1px dashed #666"></div>
<div class="a" style="left:0px;top:0px;width:1px;height:390px;border-left:1px dashed #666"></div>
<div class="a" style="left:1px;top:1px;width:37px;height:389px;background:#aaaaaa"></div>
<div class="t" style="left:46.5px;top:-2.00px;font-size:13.75px;color:#000;-webkit-text-stroke:0.35px #000">Hydrocodin/Acetaminiphin</div>
<div class="t" style="left:240.60000000000002px;top:-2.00px;font-size:13.75px;color:#000;-webkit-text-stroke:0.35px #000">9.46</div>
<div class="t" style="left:46.5px;top:32.00px;font-size:13.75px;color:#000;-webkit-text-stroke:0.35px #000">Promethazine</div>
<div class="t" style="left:192.39999999999998px;top:32.00px;font-size:13.75px;color:#000;-webkit-text-stroke:0.35px #000">12.19</div>
<div class="t" style="left:46.5px;top:66.00px;font-size:13.75px;color:#000;-webkit-text-stroke:0.35px #000">Oxycodone/Acetaminophine</div>
<div class="t" style="left:241px;top:66.00px;font-size:13.75px;color:#000;-webkit-text-stroke:0.35px #000">8.11</div>
<div class="t" style="left:326.4px;top:76.00px;font-size:13.75px;color:#000;-webkit-text-stroke:0.35px #000">Total 342.60</div>
<div class="t" style="left:47px;top:170.00px;font-size:13.75px;color:#000;-webkit-text-stroke:0.35px #000">Insurance</div>
<div class="t" style="left:48px;top:205.00px;font-size:13.75px;color:#000;-webkit-text-stroke:0.35px #000">Medicare</div>
<div class="t" style="left:240.79999999999995px;top:205.00px;font-size:13.75px;color:#000;-webkit-text-stroke:0.35px #000">1258.80</div>
<div class="t" style="left:47px;top:239.00px;font-size:13.75px;color:#000;-webkit-text-stroke:0.35px #000">Healthcare</div>
<div class="t" style="left:241px;top:239.00px;font-size:13.75px;color:#000;-webkit-text-stroke:0.35px #000">2179.20</div>
<div class="t" style="left:46px;top:273.00px;font-size:13.75px;color:#000;-webkit-text-stroke:0.35px #000">Prescription</div>
<div class="t" style="left:241px;top:273.00px;font-size:13.75px;color:#000;-webkit-text-stroke:0.35px #000">908.40</div>
<div class="t" style="left:47px;top:308.00px;font-size:13.75px;color:#000;-webkit-text-stroke:0.35px #000">Weight Watchers</div>
<div class="t" style="left:241px;top:308.00px;font-size:13.75px;color:#000;-webkit-text-stroke:0.35px #000">119.70</div>
<div class="t" style="left:326.4px;top:318.00px;font-size:13.75px;color:#000;-webkit-text-stroke:0.35px #000">Total&nbsp; 4466.10</div>
</div>
<div class="a" style="left:349px;top:547px;width:697px;height:1px;border-top:1px dashed #666"></div>
<svg class="a" style="left:757px;top:234px" width="29" height="12" viewBox="0 0 29 12"><rect x=".7" y=".7" width="27.6" height="10.6" fill="#fff98c" stroke="#78f000" stroke-width="1.4"/><text x="2" y="10" font-size="10.5" font-weight="bold" fill="#dc2430" font-family="Liberation Sans" textLength="18" lengthAdjust="spacingAndGlyphs">T/R</text><rect x="21.6" y="1.8" width="4.6" height="4.6" rx="2.2" fill="#eee" stroke="#111" stroke-width="1.2"/><rect x="21.6" y="6" width="4.6" height="4.6" rx="2.2" fill="#ddd" stroke="#111" stroke-width="1.2"/></svg>
<div class="a" style="left:750px;top:223px;width:47px;height:39px;border:3px solid #ec1620"></div>
<svg class="a" style="left:769px;top:475px" width="29" height="12" viewBox="0 0 29 12"><rect x=".7" y=".7" width="27.6" height="10.6" fill="#fff98c" stroke="#78f000" stroke-width="1.4"/><text x="2" y="10" font-size="10.5" font-weight="bold" fill="#dc2430" font-family="Liberation Sans" textLength="18" lengthAdjust="spacingAndGlyphs">T/R</text><rect x="21.6" y="1.8" width="4.6" height="4.6" rx="2.2" fill="#eee" stroke="#111" stroke-width="1.2"/><rect x="21.6" y="6" width="4.6" height="4.6" rx="2.2" fill="#ddd" stroke="#111" stroke-width="1.2"/></svg>
<div class="a" style="left:764px;top:466px;width:48px;height:29px;border:3px solid #ec1620"></div>
<div class="a" style="left:343px;top:548px;width:5px;height:28px;background:#e8e8e8;border-bottom:1px solid #c0c8d0"></div>
<div class="a" style="left:348px;top:548px;width:698px;height:28px;background:#fff;border-bottom:1px solid #c0c8d0;border-left:1px solid #c0c8d0"></div>
<svg class="a" style="left:555px;top:554px" width="12" height="15" viewBox="0 0 12 15"><rect x="0" y="0" width="2.5" height="15" fill="#2a64a6"/><path d="M11.5 0v15L3 7.5z" fill="#2a64a6"/></svg>
<svg class="a" style="left:592px;top:554px" width="9" height="15" viewBox="0 0 9 15"><path d="M9 0v15L0 7.5z" fill="#2a64a6"/></svg>
<div class="a" style="left:619px;top:552px;width:40px;height:19px;background:#fff;border:1px solid #d0d0d0"></div>
<div class="t" style="right:390.4px;top:557px;font-size:12px;color:#111;">41</div>
<div class="t" style="left:669px;top:557px;font-size:12px;color:#111;">of</div>
<div class="t" style="left:690px;top:557px;font-size:12px;color:#111;">42</div>
<div class="t" style="left:708.5px;top:558px;font-size:11.3px;color:#111;">Pages</div>
<svg class="a" style="left:754px;top:554px" width="9" height="15" viewBox="0 0 9 15"><path d="M0 0v15L9 7.5z" fill="#2a64a6"/></svg>
<svg class="a" style="left:782px;top:554px" width="12" height="15" viewBox="0 0 12 15"><path d="M0 0v15L8.5 7.5z" fill="#2a64a6"/><rect x="9.5" y="0" width="2.5" height="15" fill="#2a64a6"/></svg>
<div class="a" style="left:816px;top:552px;width:1px;height:18px;background:#d8d8d8"></div>
<div class="a" style="left:831px;top:553px;width:16px;height:16px;background:#2a64a6"></div>
<div class="a" style="left:835px;top:560px;width:8px;height:2px;background:#fff"></div>
<div class="a" style="left:857px;top:552px;width:50px;height:19px;background:#fff;border:1px solid #c8c8c8"></div>
<div class="a" style="left:887px;top:552px;width:1px;height:19px;background:#c8c8c8"></div>
<div class="t" style="left:862px;top:558px;font-size:11.5px;color:#111;">100</div>
<svg class="a" style="left:892px;top:557px" width="11" height="8" viewBox="0 0 11 8"><path d="M1 1.5l4.5 4.5 4.5-4.5" stroke="#333" stroke-width="1.6" fill="none"/></svg>
<div class="a" style="left:916px;top:553px;width:16px;height:16px;background:#2a64a6"></div>
<div class="a" style="left:920px;top:560px;width:8px;height:2px;background:#fff"></div>
<div class="a" style="left:923px;top:557px;width:2px;height:8px;background:#fff"></div>
<div class="a" style="left:952px;top:552px;width:1px;height:18px;background:#d8d8d8"></div>
<svg class="a" style="left:971px;top:554px" width="9" height="15" viewBox="0 0 9 15"><path d="M9 0v15L0 7.5z" fill="#2a64a6"/></svg>
<svg class="a" style="left:997px;top:553px" width="16" height="16" viewBox="0 0 16 16"><circle cx="8" cy="8" r="6.5" fill="#fff" stroke="#222" stroke-width="2.2"/><path d="M8 4v4.5h3" stroke="#222" stroke-width="1.4" fill="none"/></svg>
<svg class="a" style="left:1031px;top:554px" width="9" height="15" viewBox="0 0 9 15"><path d="M0 0v15L9 7.5z" fill="#a8c4e0"/></svg>
<div class="a" style="left:7px;top:576px;width:1039px;height:4px;background:#fff"></div>
<div class="a" style="left:7px;top:580px;width:1039px;height:273px;border:1px solid #bcc6d0;border-right:none;border-bottom:none;background:#fff"></div>
<div class="a" style="left:8px;top:581px;width:1038px;height:21px;background:#e8ebf0;border-bottom:1px solid #8a8f96"></div>
<svg class="a" style="left:12px;top:585px" width="8" height="11" viewBox="0 0 8 11"><rect x="0" y="0" width="2.2" height="2.2" fill="#1a5aa0"/><rect x="4" y="0" width="2.2" height="2.2" fill="#1a5aa0"/><rect x="0" y="4" width="2.2" height="2.2" fill="#1a5aa0"/><rect x="4" y="4" width="2.2" height="2.2" fill="#1a5aa0"/><rect x="0" y="8" width="2.2" height="2.2" fill="#1a5aa0"/><rect x="4" y="8" width="2.2" height="2.2" fill="#1a5aa0"/></svg>
<div class="t" style="left:22.5px;top:586px;font-size:11.7px;color:#2d6aa8;">Leads/Notes</div>
<div class="a" style="left:8px;top:602px;width:1038px;height:19px;background:#f0f0f0;border-top:1px solid #a6a6a6;border-bottom:1px solid #a6a6a6"></div>
<div class="a" style="left:38px;top:602px;width:1px;height:19px;background:#a6a6a6"></div>
<div class="a" style="left:66px;top:602px;width:1px;height:19px;background:#a6a6a6"></div>
<div class="t" style="left:-147.5px;width:400px;text-align:center;top:607px;font-size:12px;color:#222;">A</div>
<div class="a" style="left:94px;top:602px;width:1px;height:19px;background:#a6a6a6"></div>
<div class="t" style="left:-119.5px;width:400px;text-align:center;top:607px;font-size:12px;color:#222;">B</div>
<div class="a" style="left:122px;top:602px;width:1px;height:19px;background:#a6a6a6"></div>
<div class="t" style="left:-91.5px;width:400px;text-align:center;top:607px;font-size:12px;color:#222;">C</div>
<div class="a" style="left:150px;top:602px;width:1px;height:19px;background:#a6a6a6"></div>
<div class="t" style="left:-63.5px;width:400px;text-align:center;top:607px;font-size:12px;color:#222;">D</div>
<div class="a" style="left:491px;top:602px;width:1px;height:19px;background:#a6a6a6"></div>
<div class="t" style="left:121.0px;width:400px;text-align:center;top:607px;font-size:12px;color:#222;">E</div>
<div class="a" style="left:492px;top:603px;width:160px;height:17px;background:#3399ff"></div>
<div class="a" style="left:652px;top:602px;width:1px;height:19px;background:#a6a6a6"></div>
<div class="t" style="left:372.0px;width:400px;text-align:center;top:607px;font-size:12px;color:#fff;">G</div>
<div class="a" style="left:693px;top:602px;width:1px;height:19px;background:#a6a6a6"></div>
<div class="t" style="left:473.0px;width:400px;text-align:center;top:607px;font-size:12px;color:#222;">H</div>
<div class="a" style="left:760px;top:602px;width:1px;height:19px;background:#a6a6a6"></div>
<div class="t" style="left:527.0px;width:400px;text-align:center;top:607px;font-size:12px;color:#222;">I</div>
<div class="a" style="left:826px;top:602px;width:1px;height:19px;background:#a6a6a6"></div>
<div class="t" style="left:593.5px;width:400px;text-align:center;top:607px;font-size:12px;color:#222;">J</div>
<div class="a" style="left:892px;top:602px;width:1px;height:19px;background:#a6a6a6"></div>
<div class="t" style="left:659.5px;width:400px;text-align:center;top:607px;font-size:12px;color:#222;">K</div>
<div class="a" style="left:958px;top:602px;width:1px;height:19px;background:#a6a6a6"></div>
<div class="t" style="left:725.5px;width:400px;text-align:center;top:607px;font-size:12px;color:#222;">L</div>
<div class="a" style="left:1024px;top:602px;width:1px;height:19px;background:#a6a6a6"></div>
<div class="t" style="left:791.5px;width:400px;text-align:center;top:607px;font-size:12px;color:#222;">M</div>
<div class="a" style="left:1090px;top:602px;width:1px;height:19px;background:#a6a6a6"></div>
<div class="a" style="left:8px;top:602px;width:1px;height:250px;background:#a6a6a6"></div>
<div class="a" style="left:9px;top:621px;width:29px;height:20px;background:#f0f0f0;overflow:hidden"><div class="t" style="left:0;width:29px;text-align:center;top:11px;font-size:11.5px;color:#222">53</div></div>
<div class="a" style="left:9px;top:641px;width:29px;height:1px;background:#a6a6a6"></div>
<div class="a" style="left:9px;top:642px;width:29px;height:20px;background:#f0f0f0;overflow:hidden"><div class="t" style="left:0;width:29px;text-align:center;top:11px;font-size:11.5px;color:#222">54</div></div>
<div class="a" style="left:9px;top:662px;width:29px;height:1px;background:#a6a6a6"></div>
<div class="a" style="left:9px;top:663px;width:29px;height:20px;background:#f0f0f0;overflow:hidden"><div class="t" style="left:0;width:29px;text-align:center;top:11px;font-size:11.5px;color:#222">55</div></div>
<div class="a" style="left:9px;top:683px;width:29px;height:1px;background:#a6a6a6"></div>
<div class="a" style="left:9px;top:684px;width:29px;height:20px;background:#f0f0f0;overflow:hidden"><div class="t" style="left:0;width:29px;text-align:center;top:11px;font-size:11.5px;color:#222">56</div></div>
<div class="a" style="left:9px;top:704px;width:29px;height:1px;background:#a6a6a6"></div>
<div class="a" style="left:9px;top:705px;width:29px;height:20px;background:#f0f0f0;overflow:hidden"><div class="t" style="left:0;width:29px;text-align:center;top:11px;font-size:11.5px;color:#222">57</div></div>
<div class="a" style="left:9px;top:725px;width:29px;height:1px;background:#a6a6a6"></div>
<div class="a" style="left:9px;top:726px;width:29px;height:20px;background:#f0f0f0;overflow:hidden"><div class="t" style="left:0;width:29px;text-align:center;top:11px;font-size:11.5px;color:#222">58</div></div>
<div class="a" style="left:9px;top:746px;width:29px;height:1px;background:#a6a6a6"></div>
<div class="a" style="left:9px;top:747px;width:29px;height:20px;background:#3399ff;overflow:hidden"><div class="t" style="left:0;width:29px;text-align:center;top:11px;font-size:11.5px;color:#fff">59</div></div>
<div class="a" style="left:9px;top:767px;width:29px;height:1px;background:#a6a6a6"></div>
<div class="a" style="left:9px;top:768px;width:29px;height:20px;background:#f0f0f0;overflow:hidden"><div class="t" style="left:0;width:29px;text-align:center;top:11px;font-size:11.5px;color:#222">60</div></div>
<div class="a" style="left:9px;top:788px;width:29px;height:1px;background:#a6a6a6"></div>
<div class="a" style="left:9px;top:789px;width:29px;height:20px;background:#f0f0f0;overflow:hidden"><div class="t" style="left:0;width:29px;text-align:center;top:11px;font-size:11.5px;color:#222">61</div></div>
<div class="a" style="left:9px;top:809px;width:29px;height:1px;background:#a6a6a6"></div>
<div class="a" style="left:9px;top:810px;width:29px;height:20px;background:#f0f0f0;overflow:hidden"><div class="t" style="left:0;width:29px;text-align:center;top:11px;font-size:11.5px;color:#222">62</div></div>
<div class="a" style="left:9px;top:830px;width:29px;height:1px;background:#a6a6a6"></div>
<div class="a" style="left:9px;top:831px;width:29px;height:20px;background:#f0f0f0;overflow:hidden"><div class="t" style="left:0;width:29px;text-align:center;top:11px;font-size:11.5px;color:#222">63</div></div>
<div class="a" style="left:9px;top:851px;width:29px;height:1px;background:#a6a6a6"></div>
<div class="a" style="left:38px;top:620px;width:1px;height:232px;background:#a6a6a6"></div>
<div class="a" style="left:494px;top:636px;width:14px;height:6px;background:#d8d8d8;border:1px solid #777"></div>
<div class="t" style="left:520px;top:627px;font-size:12px;color:#2e9e2e;">$</div>
<div class="t" style="right:415.5px;top:627px;font-size:12px;color:#2e9e2e;">72</div>
<div class="a" style="left:150px;top:662px;width:502px;height:21px;background:#ecebe2"></div>
<div class="a" style="left:494px;top:657px;width:14px;height:6px;background:#d8d8d8;border:1px solid #777"></div>
<div class="t" style="left:520px;top:647px;font-size:12px;color:#2e9e2e;">$</div>
<div class="t" style="right:415.5px;top:647px;font-size:12px;color:#2e9e2e;">54</div>
<div class="t" style="right:557.5px;top:669px;font-size:11.4px;color:#222;font-weight:bold">SubTotal</div>
<div class="t" style="left:521px;top:668px;font-size:12px;color:#222;font-weight:bold">$</div>
<div class="t" style="right:415.5px;top:669px;font-size:11.4px;color:#222;font-weight:bold">3,971</div>
<div class="a" style="left:636px;top:678px;width:14px;height:6px;background:#d8d8d8;border:1px solid #777"></div>
<div class="t" style="left:41.8px;top:689px;font-size:13.4px;color:#111;font-weight:bold">MEDICAL AND DENTAL</div>
<div class="t" style="left:69px;top:710px;font-size:13px;color:#111;text-decoration:underline">Medical and Dental Expenses</div>
<div class="t" style="left:97.4px;top:732px;font-size:12.4px;color:#333;font-style:italic">OM:Amount</div>
<div class="t" style="left:153.4px;top:752px;font-size:12px;color:#333;">Prescriptions</div>
<svg class="a" style="left:494px;top:749px" width="12" height="9" viewBox="0 0 12 9"><path d="M1 4.5l3.5 3.5L11 1" stroke="#1a9a1a" stroke-width="2" fill="none"/></svg>
<div class="a" style="left:494px;top:762px;width:14px;height:6px;background:#d8d8d8;border:1px solid #777"></div>
<div class="t" style="left:519.5px;top:752px;font-size:12px;color:#333;">$</div>
<div class="t" style="right:415.5px;top:752px;font-size:12px;color:#333;">343</div>
<div class="t" style="left:153.4px;top:773px;font-size:12px;color:#333;">Insurance</div>
<svg class="a" style="left:494px;top:770px" width="12" height="9" viewBox="0 0 12 9"><path d="M1 4.5l3.5 3.5L11 1" stroke="#1a9a1a" stroke-width="2" fill="none"/></svg>
<div class="a" style="left:494px;top:783px;width:14px;height:6px;background:#d8d8d8;border:1px solid #777"></div>
<div class="t" style="left:519.5px;top:773px;font-size:12px;color:#333;">$</div>
<div class="t" style="right:415.5px;top:773px;font-size:12px;color:#333;">4,466</div>
<div class="t" style="left:153.4px;top:794px;font-size:12px;color:#333;">Doctor</div>
<svg class="a" style="left:494px;top:791px" width="12" height="9" viewBox="0 0 12 9"><path d="M1 4.5l3.5 3.5L11 1" stroke="#1a9a1a" stroke-width="2" fill="none"/></svg>
<div class="a" style="left:494px;top:804px;width:14px;height:6px;background:#d8d8d8;border:1px solid #777"></div>
<div class="t" style="left:519.5px;top:794px;font-size:12px;color:#333;">$</div>
<div class="t" style="right:415.5px;top:794px;font-size:12px;color:#333;">2,926</div>
<div class="a" style="left:150px;top:809px;width:502px;height:21px;background:#ecebe2"></div>
<div class="t" style="right:557.5px;top:815px;font-size:11.4px;color:#222;font-weight:bold">SubTotal</div>
<div class="t" style="left:521px;top:814px;font-size:12px;color:#222;font-weight:bold">$</div>
<div class="t" style="right:415.5px;top:815px;font-size:11.4px;color:#222;font-weight:bold">7,735</div>
<div class="a" style="left:636px;top:825px;width:14px;height:6px;background:#d8d8d8;border:1px solid #777"></div>
<div class="a" style="left:491px;top:746px;width:162px;height:22px;border:3px solid #555"></div>
<div class="a" style="left:649px;top:765px;width:5px;height:5px;background:#333"></div>
<div class="a" style="left:481px;top:735px;width:186px;height:56px;border:3px solid #ec1620"></div>
</div></body></html>
